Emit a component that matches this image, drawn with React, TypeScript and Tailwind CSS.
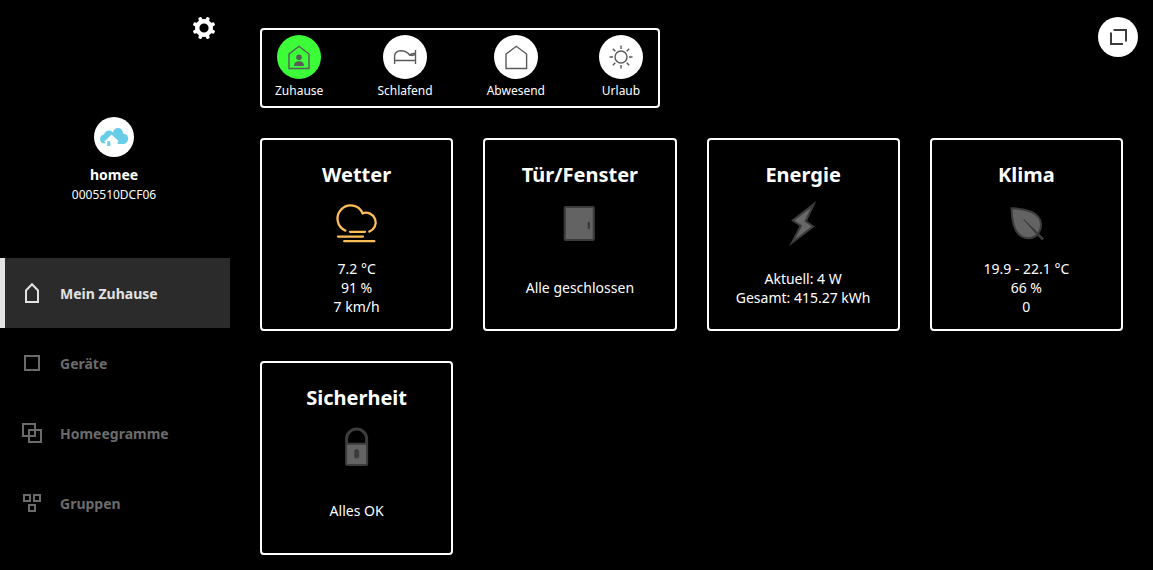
import type { ReactNode } from "react";

type Mode = { label: string; icon: ReactNode; active?: boolean };
type NavItem = { label: string; icon: ReactNode; active?: boolean };
type Card = { title: string; icon: ReactNode; lines: string[] };

function GearIcon() {
  return (
    <svg width="24" height="24" viewBox="0 0 24 24" aria-hidden="true">
      <circle cx="12" cy="12" r="6.8" fill="none" stroke="#fff" strokeWidth="4.4" />
      <g fill="#fff">
        {[22.5, 67.5, 112.5, 157.5, 202.5, 247.5, 292.5, 337.5].map((angle) => (
          <path key={angle} d="M9.9 4.2L10.4 1.1Q10.5 0.6 11 0.6H13Q13.5 0.6 13.6 1.1L14.1 4.2Z" transform={`rotate(${angle} 12 12)`} />
        ))}
      </g>
    </svg>
  );
}

function CloudHomeLogo() {
  return (
    <svg width="40" height="40" viewBox="0 0 40 40" aria-hidden="true">
      <g fill="#68cde6">
        <circle cx="10.5" cy="22" r="4.5" />
        <circle cx="15" cy="18.5" r="5" />
        <circle cx="24" cy="16" r="5" />
        <circle cx="29" cy="21.7" r="5.2" />
        <path d="M14 16H24L29 20V26.9H14Z" />
      </g>
      <path d="M10 25L17.5 17.6L25 24.5H23.7V30H11.4V25Z" fill="#fff" />
      <path d="M13.3 24.2H16.3V29H13.3Z" fill="#68cde6" />
    </svg>
  );
}

function ExpandIcon() {
  return (
    <svg width="40" height="40" viewBox="0 0 40 40" fill="none" stroke="#3c3c3b" strokeWidth="2" aria-hidden="true">
      <path d="M15.5 13H28V24.5M25 27H13V15.5" />
    </svg>
  );
}

const modeIcon = "h-11 w-11";

const modes: Mode[] = [
  {
    label: "Zuhause",
    active: true,
    icon: (
      <svg className={modeIcon} viewBox="0 0 44 44" aria-hidden="true">
        <path d="M12 19L22 11.3L32 19V33.5H12Z" fill="none" stroke="#5a5a5a" strokeWidth="1.4" />
        <circle cx="22" cy="22.3" r="2.8" fill="#5a5a5a" />
        <path d="M17 31C17 28 18.5 26.3 22 26.3S27 28 27 31Z" fill="#5a5a5a" />
      </svg>
    ),
  },
  {
    label: "Schlafend",
    icon: (
      <svg className={modeIcon} viewBox="0 0 44 44" fill="none" stroke="#5a5a5a" strokeWidth="1.4" aria-hidden="true">
        <path d="M11.6 29V20.5Q12.5 16 17.5 15.8C22 15.7 24.5 17 26.6 20Q29 18 32.5 18.8M11.6 25.5H32.5M32.5 15V29M27 20.2Q30 21.3 32.5 18.8" />
      </svg>
    ),
  },
  {
    label: "Abwesend",
    icon: (
      <svg className={modeIcon} viewBox="0 0 44 44" fill="none" stroke="#5a5a5a" strokeWidth="1.4" aria-hidden="true">
        <path d="M12 19L22.3 11.3L32.6 19V33.5H12Z" />
      </svg>
    ),
  },
  {
    label: "Urlaub",
    icon: (
      <svg className={modeIcon} viewBox="0 0 44 44" fill="none" stroke="#5a5a5a" strokeWidth="1.4" aria-hidden="true">
        <circle cx="22" cy="22" r="6" />
        <path d="M22 10.5V14M22 30V33.5M10.5 22H14M30 22H33.5M13.8 13.8L16.3 16.3M27.7 27.7L30.2 30.2M30.2 13.8L27.7 16.3M16.3 27.7L13.8 30.2" />
      </svg>
    ),
  },
];

const navItems: NavItem[] = [
  { label: "Mein Zuhause", active: true, icon: <path d="M6 9.5L12 3.2L18 9.5V21H6Z" /> },
  { label: "Geräte", icon: <path d="M5 5H19V19H5Z" /> },
  { label: "Homeegramme", icon: <path d="M3 3H15V15H3ZM9 9H21V21H9Z" /> },
  { label: "Gruppen", icon: <path d="M4 4H10V10H4ZM14 4H20V10H14ZM9 14H15V20H9Z" /> },
];

const cards: Card[] = [
  {
    title: "Wetter",
    lines: ["7.2 °C", "91 %", "7 km/h"],
    icon: (
      <svg width="48" height="48" viewBox="0 0 48 48" fill="none" stroke="#fdbe57" strokeWidth="2.3" strokeLinecap="round" aria-hidden="true">
        <path d="M12.4 30.6A13.1 13.1 0 1 1 29.6 13.3A9.6 9.6 0 1 1 36.3 31.6M17 31.8H32M5 36.6H30M11.2 41.2H41.3" />
      </svg>
    ),
  },
  {
    title: "Tür/Fenster",
    lines: ["Alle geschlossen"],
    icon: (
      <svg width="48" height="48" viewBox="0 0 48 48" aria-hidden="true">
        <rect x="8.8" y="7" width="29" height="33" rx="1" fill="#636363" stroke="#3c3c3c" strokeWidth="2.2" />
        <path d="M32.8 23V28" stroke="#3c3c3c" strokeWidth="2.4" strokeLinecap="round" />
      </svg>
    ),
  },
  {
    title: "Energie",
    lines: ["Aktuell: 4 W", "Gesamt: 415.27 kWh"],
    icon: (
      <svg width="48" height="48" viewBox="0 0 48 48" aria-hidden="true">
        <path d="M37.5 0.7L12 20.4L20.5 26.1L10 46.3L35.9 26.4L28 21Z" fill="#3c3c3c" />
        <path d="M31.8 8L15.3 20.5L23.2 25.6L16.2 38.9L32.5 26.4L25.3 21.5Z" fill="#686868" />
      </svg>
    ),
  },
  {
    title: "Klima",
    lines: ["19.9 - 22.1 °C", "66 %", "0"],
    icon: (
      <svg width="48" height="48" viewBox="0 0 48 48" aria-hidden="true">
        <path d="M9.6 8.2C22.3 8.4 39.2 12 39 24.8C38.9 32.6 33.3 38.4 26.3 38.2C13.3 37.8 9.8 23 9.6 8.2Z" fill="#636363" stroke="#3c3c3c" strokeWidth="2" />
        <path d="M21.8 19.5L41.6 38.6L40.1 40L34.1 33.6Z" fill="#3c3c3c" stroke="#3c3c3c" strokeLinejoin="round" />
      </svg>
    ),
  },
  {
    title: "Sicherheit",
    lines: ["Alles OK"],
    icon: (
      <svg width="48" height="48" viewBox="0 0 48 48" aria-hidden="true">
        <path d="M13.6 21V16A10 10 0 0 1 33.6 16V21" fill="none" stroke="#3c3c3c" strokeWidth="3" />
        <rect x="13.1" y="20.7" width="21" height="21.3" rx="1" fill="#636363" stroke="#3c3c3c" strokeWidth="2" />
        <path d="M23.7 28.5V33" stroke="#3c3c3c" strokeWidth="5" strokeLinecap="round" />
      </svg>
    ),
  },
];

function Sidebar() {
  return (
    <aside className="w-[230px] shrink-0">
      <div className="flex justify-end px-3.5 pt-4">
        <button type="button" aria-label="Einstellungen" className="flex h-6 w-6 items-center justify-center">
          <GearIcon />
        </button>
      </div>
      <div className="flex flex-col items-center pt-[77px] pr-[2px]">
        <div className="rounded-full bg-white">
          <CloudHomeLogo />
        </div>
        <p className="mt-2 text-[14px] leading-5 font-bold">homee</p>
        <p className="text-[12px] leading-5">0005510DCF06</p>
      </div>
      <nav className="mt-[53px]">
        {navItems.map((item) => (
          <a
            key={item.label}
            href="#"
            aria-current={item.active ? "page" : undefined}
            className={
              item.active
                ? "flex h-[70px] items-center gap-4 border-l-[5px] border-[#e2e2e2] bg-[#2b2b2b] pl-[15px] text-[14px] font-bold text-[#e2e2e2]"
                : "flex h-[70px] items-center gap-4 border-l-[5px] border-transparent pl-[15px] text-[14px] font-bold text-[#6b6b6b]"
            }
          >
            <svg width="24" height="24" viewBox="0 0 24 24" fill="none" stroke="currentColor" strokeWidth="2" aria-hidden="true">
              {item.icon}
            </svg>
            {item.label}
          </a>
        ))}
      </nav>
    </aside>
  );
}

export default function App() {
  return (
    <div className="flex min-h-screen bg-black font-['Noto_Sans',sans-serif] text-white">
      <Sidebar />
      <main className="min-w-0 flex-1 px-[30px] pb-4">
        <header className="flex items-start justify-between">
          <div className="mt-7 flex h-20 w-[400px] justify-between rounded border-2 border-white pt-[5px] pr-[15px] pl-[13px]">
            {modes.map((mode) => (
              <button key={mode.label} type="button" aria-pressed={!!mode.active} className="flex flex-col items-center">
                <span className={mode.active ? "rounded-full bg-[#3bfd38]" : "rounded-full bg-white"}>{mode.icon}</span>
                <span className="mt-1 text-[12px] leading-4">{mode.label}</span>
              </button>
            ))}
          </div>
          <button type="button" aria-label="Vergrößern" className="mt-[17px] -mr-[15px] rounded-full bg-white">
            <ExpandIcon />
          </button>
        </header>
        <div className="mt-[30px] grid grid-cols-4 gap-[30px]">
          {cards.map((card) => (
            <section key={card.title} className="flex aspect-square flex-col items-center rounded border-2 border-white pt-5 text-center">
              <h2 className="text-[20px] leading-[30px] font-bold">{card.title}</h2>
              <div className="flex h-[68px] items-center">{card.icon}</div>
              <div className="flex h-[59px] flex-col justify-center text-[14px] leading-[19px]">
                {card.lines.map((line) => (
                  <p key={line}>{line}</p>
                ))}
              </div>
            </section>
          ))}
        </div>
      </main>
    </div>
  );
}
